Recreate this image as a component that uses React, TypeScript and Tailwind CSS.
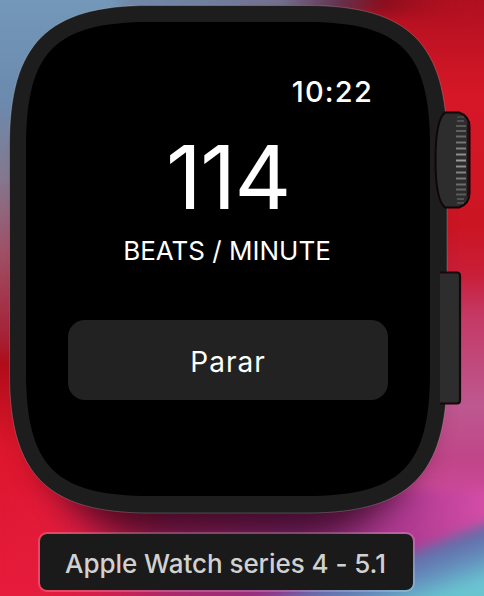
const ticks = [
  [116, 0.15], [120, 0.25], [125, 0.3], [130, 0.35], [135.5, 0.42], [141.5, 0.5], [147.5, 0.58], [153.5, 0.68],
  [159.5, 0.75], [165.5, 0.68], [171.5, 0.6], [177.5, 0.52], [183.5, 0.44], [188.5, 0.38], [193.5, 0.32], [198, 0.26], [202, 0.2],
];

const casePath =
  "M149.500 5.500H307C409 5.500 447 43.500 447 145.500V373C447 475 409 513 307 513H149.500C47.500 513 9.500 475 9.500 373V145.500C9.500 43.500 47.500 5.500 149.500 5.500Z";
const screenPath =
  "M151 22H305C401 22 430 51 430 147V371C430 467 401 496 305 496H151C55 496 26 467 26 371V147C26 51 55 22 151 22Z";

function Wallpaper() {
  return (
    <div className="absolute inset-0 overflow-hidden bg-[#d51628]">
      <svg width="484" height="596" viewBox="0 0 484 596">
        <defs>
          <linearGradient id="left" x1="0" y1="0" x2="0" y2="596" gradientUnits="userSpaceOnUse">
            <stop offset="0" stopColor="#7398b9" />
            <stop offset="0.17" stopColor="#6b8aad" />
            <stop offset="0.3" stopColor="#86788f" />
            <stop offset="0.42" stopColor="#a05268" />
            <stop offset="0.57" stopColor="#a82034" />
            <stop offset="0.61" stopColor="#b20d1b" />
            <stop offset="0.75" stopColor="#dc162c" />
            <stop offset="1" stopColor="#e81c3d" />
          </linearGradient>
          <linearGradient id="top" x1="0" y1="0" x2="484" y2="0" gradientUnits="userSpaceOnUse">
            <stop offset="0" stopColor="#7398b9" />
            <stop offset="0.4" stopColor="#71809f" />
            <stop offset="0.58" stopColor="#72708f" />
            <stop offset="0.7" stopColor="#613350" />
            <stop offset="0.79" stopColor="#8a0e1d" />
            <stop offset="1" stopColor="#bd101f" stopOpacity="0" />
          </linearGradient>
          <linearGradient id="right" x1="0" y1="0" x2="0" y2="596" gradientUnits="userSpaceOnUse">
            <stop offset="0" stopColor="#b01020" />
            <stop offset="0.16" stopColor="#d61727" />
            <stop offset="0.38" stopColor="#cb1523" />
            <stop offset="0.46" stopColor="#c91e38" />
            <stop offset="0.53" stopColor="#c53965" />
            <stop offset="0.68" stopColor="#bd5890" />
            <stop offset="0.77" stopColor="#c14589" />
            <stop offset="0.87" stopColor="#d34da6" />
            <stop offset="1" stopColor="#bb4a9c" />
          </linearGradient>
          <linearGradient id="bottom" x1="0" y1="0" x2="484" y2="0" gradientUnits="userSpaceOnUse">
            <stop offset="0" stopColor="#e81c3d" stopOpacity="0" />
            <stop offset="0.12" stopColor="#df1c40" stopOpacity="0.6" />
            <stop offset="0.35" stopColor="#aa286c" />
            <stop offset="0.6" stopColor="#933083" />
            <stop offset="0.85" stopColor="#b13b92" />
            <stop offset="1" stopColor="#d34da6" />
          </linearGradient>
          <linearGradient id="wave" x1="425" y1="530" x2="448" y2="594" gradientUnits="userSpaceOnUse">
            <stop offset="0" stopColor="#8559a5" />
            <stop offset="0.3" stopColor="#6569a7" />
            <stop offset="0.65" stopColor="#648fbd" />
            <stop offset="1" stopColor="#69c4d0" />
          </linearGradient>
          <filter id="soft" x="-30%" y="-60%" width="160%" height="220%" colorInterpolationFilters="sRGB">
            <feGaussianBlur stdDeviation="6" />
          </filter>
          <filter id="shadow" x="-30%" y="-30%" width="160%" height="160%" colorInterpolationFilters="sRGB">
            <feGaussianBlur stdDeviation="17" />
          </filter>
        </defs>
        <rect width="240" height="596" fill="url(#left)" />
        <rect x="240" width="244" height="596" fill="url(#right)" />
        <path d="M120 -30H500V14H120Z" fill="url(#top)" filter="url(#soft)" />
        <path d="M-30 490H520V630H-30Z" fill="url(#bottom)" filter="url(#soft)" />
        <rect x="38" y="68" width="383" height="470" rx="120" fill="#26000f" opacity="0.75" filter="url(#shadow)" />
        <path d="M170 625Q360 575 412 552Q446 538 510 515V630Z" fill="url(#wave)" filter="url(#soft)" />
      </svg>
    </div>
  );
}

function WatchBody() {
  return (
    <svg className="absolute inset-0" width="484" height="596" viewBox="0 0 484 596">
      <path d={casePath} fill="#1d1d1d" stroke="#ffffff" strokeOpacity="0.2" strokeWidth="1" />
      <path d={screenPath} fill="#000" />
      <path
        d="M445 112.500H459Q469.500 116 469.500 127V193Q469.500 204 459 207.500H445C438 202 435.500 183 435.500 160S438 118 445 112.500Z"
        fill="#2d2d2d"
        stroke="#100507"
        strokeWidth="2"
      />
      <path d="M468 123V197" stroke="#290b10" strokeWidth="2" />
      {ticks.map(([y, o]) => (
        <rect key={y} x={y < 121 || y > 197 ? 457 : 456} y={y} width={y < 121 || y > 197 ? 7 : 10} height="2" fill="#bdbdbd" opacity={o} />
      ))}
      <path d="M440 272.500H457Q460 272.500 460 276V400Q460 403.500 457 403.500H440Z" fill="#2d2d2d" />
      <path d="M440 272.500H457Q460 272.500 460 276V400Q460 403.500 457 403.500H440" fill="none" stroke="#16070c" strokeWidth="2.200" />
    </svg>
  );
}

export default function App() {
  return (
    <main className="relative h-[596px] w-[484px] overflow-hidden font-['Inter',sans-serif]">
      <Wallpaper />
      <WatchBody />
      <div className="relative flex h-full flex-col">
        <section className="ml-[26px] mt-[22px] flex h-[474px] w-[404px] flex-col px-[42px] text-white">
          <time className="mr-[15px] mt-[52px] self-end text-[29px] font-medium leading-[36px] tracking-[1.2px]">10:22</time>
          <div className="mt-[21px] h-[92px] text-center text-[88px] leading-[92px] tracking-[-1.5px]">114</div>
          <div className="mt-[10px] h-[36px] whitespace-nowrap pr-[2px] text-center text-[26px] leading-[36px]">BEATS / MINUTE</div>
          <button className="mt-[51px] h-[80px] w-[320px] rounded-[17px] bg-[#222] pt-[3px] text-[28px] tracking-[1px]">Parar</button>
        </section>
        <footer className="ml-[38px] mt-[36px] flex h-[60px] w-[377px] items-center justify-center whitespace-nowrap rounded-[9px] border-2 border-white/20 bg-[#1a1a1a] bg-clip-padding pr-[2px] pt-[2px] text-[26px] font-medium tracking-[-0.05px] text-[#d1d1d1]">
          Apple Watch series 4 - 5.1
        </footer>
      </div>
    </main>
  );
}
